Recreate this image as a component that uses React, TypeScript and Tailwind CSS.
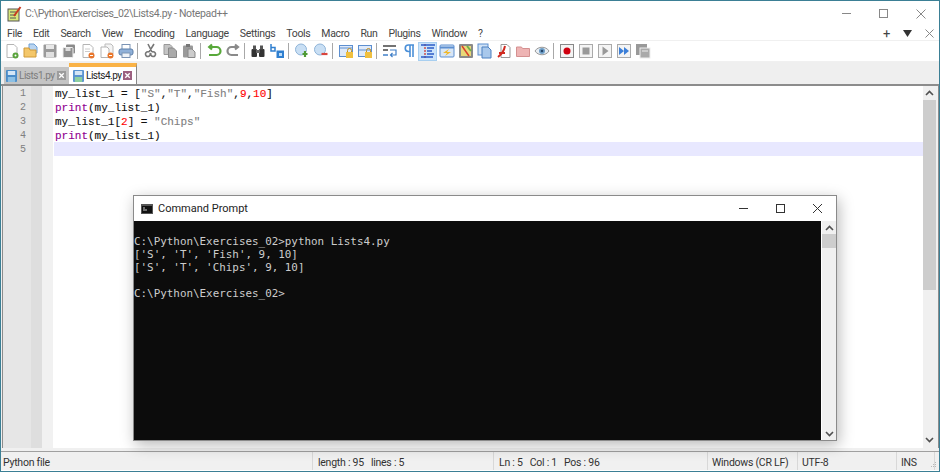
import type { ReactNode } from 'react';

const MENUS = ['File', 'Edit', 'Search', 'View', 'Encoding', 'Language', 'Settings', 'Tools', 'Macro', 'Run', 'Plugins', 'Window', '?'];

function Ico({ children }: { children: ReactNode }) {
  return (
    <svg width="16" height="16" viewBox="0 0 16 16" fill="none">
      {children}
    </svg>
  );
}

const Page = ({ fill = '#fff' }: { fill?: string }) => <path d="M3 1.5h7l3 3v10H3z" fill={fill} stroke="#b4b4b4" />;
const Floppy = ({ c = '#9a9a9a' }: { c?: string }) => (
  <>
    <rect x="1.5" y="1.5" width="13" height="13" rx="1" fill={c} />
    <rect x="4" y="2" width="8" height="4" fill="#e8e8e8" />
    <rect x="4" y="9" width="8" height="5" fill="#e0e0e0" />
  </>
);

// toolbar drawings, in the order they sit on the bar (null is a separator)
const TOOLS: (ReactNode | null)[] = [
  <><Page /><circle cx="11.5" cy="12.5" r="3" fill="#5aa33c" /><circle cx="11.5" cy="12.5" r="1" fill="#fff" /></>,
  <><path d="M6 1h5l3 3v6H6z" fill="#b9d4f0" stroke="#6f9fd4" /><path d="M1 5h5l1 2h6v7H1z" fill="#f4c76a" stroke="#d09a38" /></>,
  <Floppy />,
  <><rect x="5" y="1.5" width="9" height="9" rx="1" fill="#8a8a8a" /><rect x="2" y="4.5" width="10" height="10" rx="1" fill="#8f8f8f" stroke="#eee" /><rect x="4.5" y="5" width="5" height="3" fill="#ddd" /></>,
  <><Page /><path d="M5 6h5M5 8.5h5" stroke="#ccc" /><circle cx="11.5" cy="12.5" r="3" fill="#e8762c" /><path d="M10 12.5h3" stroke="#fff" /></>,
  <><path d="M6 1h6l2 2v8H6z" fill="#f4f4f4" stroke="#bbb" /><path d="M2 4h6l2 2v8.5H2z" fill="#fff" stroke="#b4b4b4" /><circle cx="11.5" cy="12.5" r="3" fill="#e8762c" /><path d="M10 12.5h3" stroke="#fff" /></>,
  <><rect x="4" y="1.5" width="8" height="5" fill="#fff" stroke="#7a93b4" /><rect x="1" y="6" width="14" height="6" rx="2" fill="#8fb0d8" stroke="#5d7ea8" /><rect x="4" y="10" width="8" height="4.5" fill="#eef2f7" stroke="#7a93b4" /></>,
  null,
  <path d="M5 1l4 8M11 1L6 9M6 9a2.4 2.4 0 1 0 1 1M9 9a2.4 2.4 0 1 1-1 1" stroke="#777" strokeWidth="1.6" />,
  <><path d="M2 1.5h6l2 2v8H2z" fill="#c4c4c4" stroke="#999" /><path d="M6.5 5h5l3 3v6.5h-8z" fill="#aaa" stroke="#888" /></>,
  <><rect x="2" y="2.5" width="10" height="12" rx="1" fill="#9a9a9a" /><rect x="5" y="1" width="4" height="3" fill="#777" /><path d="M7 6h4l3 3v5.5H7z" fill="#ccc" stroke="#888" /></>,
  null,
  <path d="M4 4h6.5a3.8 3.8 0 0 1 0 8H3M6 1.5L3.2 4 6 6.5" stroke="#58a83a" strokeWidth="2.2" />,
  <path d="M12 4H6.5a3.8 3.8 0 0 0 0 8H13M10 1.5L13 4 10 6.5" stroke="#8a8a8a" strokeWidth="2.2" />,
  null,
  <><rect x="1.5" y="6" width="5.5" height="8" rx="1" fill="#333" /><rect x="9" y="6" width="5.5" height="8" rx="1" fill="#333" /><rect x="3" y="2.5" width="3" height="4" fill="#555" /><rect x="10" y="2.5" width="3" height="4" fill="#555" /><rect x="6" y="7" width="4" height="3" fill="#666" /></>,
  <><path d="M2 1v7h4V4.5H2" stroke="#2f7fd0" strokeWidth="1.5" /><rect x="7.5" y="7.5" width="7.5" height="7.5" fill="#2f7fd0" /><path d="M10 10h3v3h-3z" fill="#bcdcf8" /></>,
  null,
  <><circle cx="7" cy="6.5" r="5.5" fill="#c9dff4" stroke="#8fb4d8" /><path d="M11 8v6M8.5 11h5" stroke="#4f9a35" strokeWidth="2.2" /></>,
  <><circle cx="7" cy="6.5" r="5.5" fill="#c9dff4" stroke="#8fb4d8" /><path d="M8.5 11h6" stroke="#d9443c" strokeWidth="2.2" /></>,
  null,
  <><rect x="1.5" y="2.5" width="13" height="11" fill="#dfeafa" stroke="#5d8fd0" /><path d="M1.5 5h13" stroke="#5d8fd0" /><rect x="8" y="9" width="7" height="6" fill="#f0c040" /><path d="M9.5 9V7.5a2 2 0 0 1 4 0V9" stroke="#c09020" /></>,
  <><rect x="1.5" y="2.5" width="13" height="11" fill="#dfeafa" stroke="#5d8fd0" /><path d="M1.5 7h13" stroke="#5d8fd0" /><rect x="8" y="9" width="7" height="6" fill="#f0c040" /><path d="M9.5 9V7.5a2 2 0 0 1 4 0V9" stroke="#c09020" /></>,
  null,
  <><path d="M1 3h13" stroke="#444" strokeWidth="1.5" /><path d="M1 7h5" stroke="#444" strokeWidth="1.5" /><path d="M8 7h6v5H9M10.5 10L8.5 12l2 2" stroke="#3f7fc8" strokeWidth="1.2" /><path d="M1 12h5" stroke="#3f7fc8" strokeWidth="1.5" /></>,
  <path d="M13 2H7.5a3.2 3.2 0 0 0 0 6.5H9V14M9 2v12M12 2v12" stroke="#4a8fd8" strokeWidth="1.6" />,
  'active',
  <><rect x="1" y="2" width="14" height="12" rx="1" fill="#d8e6f6" stroke="#5d8fd0" /><path d="M1 4.5h14" stroke="#5d8fd0" strokeWidth="2" /><path d="M10 6l-6 4h4l-2 3 6-4H8z" fill="#f0b828" /></>,
  <><rect x="1" y="1" width="14" height="14" rx="1" fill="#8a8a8a" /><rect x="3" y="3" width="10" height="10" fill="#e8d878" /><path d="M4 3l7 10" stroke="#d8402c" strokeWidth="1.5" /><path d="M9 3l4 5" stroke="#70b048" strokeWidth="2" /></>,
  <><rect x="1" y="1" width="10" height="11" fill="#d0e2f6" stroke="#5d8fd0" /><path d="M5 4h6l3 3v8H5z" fill="#a8c8ec" stroke="#4c80c0" /></>,
  <><path d="M5 1.5h6l3 3v10H5z" fill="#fff" stroke="#999" /><path d="M9 3C8 8 6 11 2 14M3 10h6" stroke="#d02a20" strokeWidth="2" /></>,
  <path d="M1.5 4h5l1 1.5h7v8h-13z" fill="#eeb4b4" stroke="#d49090" />,
  <><path d="M1 8c3-5 11-5 14 0-3 5-11 5-14 0z" fill="#e8eef4" stroke="#999" /><circle cx="8" cy="8" r="3" fill="#6f9fc8" /><circle cx="8" cy="8" r="1.3" fill="#26466a" /></>,
  null,
  <><rect x="1.5" y="1.5" width="13" height="13" fill="#f4f4f4" stroke="#888" /><circle cx="8" cy="8" r="3.5" fill="#d00010" /></>,
  <><rect x="1.5" y="1.5" width="13" height="13" fill="#f4f4f4" stroke="#aaa" /><rect x="4.5" y="4.5" width="7" height="7" fill="#999" /></>,
  <><rect x="1.5" y="1.5" width="13" height="13" fill="#f4f4f4" stroke="#aaa" /><path d="M5.5 3.5l6 4.5-6 4.5z" fill="#999" /></>,
  <><rect x="1.5" y="1.5" width="13" height="13" fill="#f4f4f4" stroke="#aaa" /><path d="M3 4l5 4-5 4zM8 4l5 4-5 4z" fill="#3c7fd8" /></>,
  <><rect x="1" y="1" width="11" height="11" fill="#999" /><rect x="5" y="5" width="10" height="10" fill="#aaa" stroke="#eee" /><path d="M7 8h6" stroke="#eee" /></>,
];

function IndentGuideIcon() {
  return (
    <Ico>
      <path d="M5 1v14" stroke="#d02a20" strokeWidth="1.2" strokeDasharray="2 1" />
      <path d="M1 2h14M7 5h7M7 8h5M7 11h7M1 14h12" stroke="#2c5cc8" strokeWidth="1.6" />
    </Ico>
  );
}

function Toolbar() {
  return (
    <div className="flex h-[22px] items-center border-y border-[#f0f0f0] bg-white pl-[1px]">
      {TOOLS.map((tool, i) =>
        tool === null ? (
          <div key={i} className="ml-[2px] mr-[3px] h-[16px] w-px bg-[#a8a8a8]" />
        ) : tool === 'active' ? (
          <div key={i} className="flex h-[19px] w-[19px] items-center justify-center border border-[#a8cff0] bg-[#cce4fa]">
            <IndentGuideIcon />
          </div>
        ) : (
          <div key={i} className="flex h-[19px] w-[19px] items-center justify-center">
            <Ico>{tool}</Ico>
          </div>
        ),
      )}
    </div>
  );
}

function TabIcon({ dim }: { dim?: boolean }) {
  return (
    <svg className="shrink-0" width="11" height="12" viewBox="0 0 12 12" preserveAspectRatio="none">
      <rect width="12" height="12" rx="1" fill={dim ? '#4a8cc8' : '#5a94d0'} />
      <rect x="2" y="1" width="8" height="4" fill="#d4e6f6" />
      <rect x="2" y="7" width="8" height="5" fill={dim ? '#8cc0e4' : '#8ed0a0'} />
    </svg>
  );
}

function TabClose({ color }: { color: string }) {
  return (
    <svg className="shrink-0" width="9" height="9" viewBox="0 0 10 10">
      <rect width="10" height="10" fill={color} />
      <path d="M2.5 2.5l5 5M7.5 2.5l-5 5" stroke="#fff" strokeWidth="1.5" />
    </svg>
  );
}

function Tabs() {
  return (
    <div className="flex h-[22px] items-end bg-[#efefef] pl-[3px] font-['Roboto',sans-serif] text-[10px]">
      <div className="flex h-[17px] w-[65px] items-center gap-[2px] bg-[#c4c4c4] pl-[2px] tracking-[-0.5px] text-[#7c7c7c]">
        <TabIcon dim />
        <span>Lists1.py</span>
        <span className="ml-auto mr-[3px] flex"><TabClose color="#9c9c9c" /></span>
      </div>
      <div className="flex h-[21px] w-[68px] items-center gap-[2px] border-t-[4px] border-r border-t-[#fab347] border-r-[#888] bg-white pl-[4px] tracking-[-0.5px] text-[#222]">
        <TabIcon />
        <span>Lists4.py</span>
        <span className="ml-auto mr-[4px] flex"><TabClose color="#9c6080" /></span>
      </div>
    </div>
  );
}

function Chevron({ up }: { up?: boolean }) {
  return (
    <svg width="9" height="6" viewBox="0 0 9 6" fill="none">
      <path d={up ? 'M1 5l3.5-3.5L8 5' : 'M1 1l3.5 3.5L8 1'} stroke="#505050" strokeWidth="1.6" />
    </svg>
  );
}

function CodeLine({ children, active }: { children?: ReactNode; active?: boolean }) {
  return <div className={`ml-[51px] h-[14px] whitespace-pre pl-[1px] leading-[16px] ${active ? 'bg-[#e8e8ff]' : ''}`}>{children}</div>;
}

const Str = ({ children }: { children: ReactNode }) => <span className="text-[#808080]">{children}</span>;
const Num = ({ children }: { children: ReactNode }) => <span className="text-[#ff0000]">{children}</span>;
const Fn = ({ children }: { children: ReactNode }) => <span className="text-[#900090]">{children}</span>;

function Editor() {
  return (
    <div className="flex h-[364px] border-t-[2px] border-[#8c8c8c] bg-[#f0f0f0] pl-[1px]">
      <div className="relative min-w-0 flex-1 border-l border-[#8c8c8c] bg-white">
        {/* margins */}
        <div className="absolute inset-y-0 left-0 flex">
          <div className="w-[28px] bg-[#e6e6e6]" />
          <div className="w-[11px] bg-[#dedede]" />
          <div className="w-[11px] bg-[#f1f1f1]" />
        </div>
        <div className="absolute left-0 top-0 w-[40px] pl-[17px] font-['Liberation_Mono',monospace] text-[10px] leading-[16px] text-[#808080]">
          {[1, 2, 3, 4, 5].map((n) => (
            <div key={n} className="h-[14px]">{n}</div>
          ))}
        </div>
        <div className="relative font-['Liberation_Mono',monospace] text-[11px] text-[#111] [-webkit-text-stroke:0.12px_currentColor]">
          <CodeLine>my_list_1 = [<Str>"S"</Str>,<Str>"T"</Str>,<Str>"Fish"</Str>,<Num>9</Num>,<Num>10</Num>]</CodeLine>
          <CodeLine><Fn>print</Fn>(my_list_1)</CodeLine>
          <CodeLine>my_list_1[<Num>2</Num>] = <Str>"Chips"</Str></CodeLine>
          <CodeLine><Fn>print</Fn>(my_list_1)</CodeLine>
          <CodeLine active />
        </div>
      </div>
      <div className="flex w-[13px] flex-col bg-[#f0f0f0]">
        <div className="flex h-[14px] items-center justify-center"><Chevron up /></div>
        <div className="h-[190px] bg-[#cdcdcd]" />
        <div className="mt-auto flex h-[14px] items-center justify-center pb-[2px]"><Chevron /></div>
      </div>
      <div className="w-[3px] border-r border-[#8c8c8c] bg-[#f0f0f0]" />
    </div>
  );
}

function StatusCell({ w, children }: { w: string; children?: ReactNode }) {
  return <div className={`flex h-full items-center whitespace-pre border-r border-[#d8d8d8] pt-[4px] ${w}`}>{children}</div>;
}

function StatusBar() {
  return (
    <div className="relative flex h-[19px] border-t border-[#a0a0a0] bg-[#f0f0f0] font-['Roboto',sans-serif] text-[10.5px] tracking-[-0.25px] text-[#333]">
      <StatusCell w="w-[312px] pl-[2px]">Python file</StatusCell>
      <StatusCell w="w-[181px] pl-[5px]">length : 95   lines : 5</StatusCell>
      <StatusCell w="w-[214px] pl-[5px]">Ln : 5   Col : 1   Pos : 96</StatusCell>
      <StatusCell w="w-[90px] pl-[4px]">Windows (CR LF)</StatusCell>
      <StatusCell w="w-[99px] pl-[4px]">UTF-8</StatusCell>
      <StatusCell w="w-[38px] pl-[4px]">INS</StatusCell>
      {/* resize grip */}
      <svg className="absolute bottom-[1px] right-[1px]" width="8" height="8" viewBox="0 0 8 8" fill="#b8b8b8">
        <rect x="5" y="1" width="1" height="1" />
        <rect x="3" y="3" width="1" height="1" />
        <rect x="5" y="3" width="1" height="1" />
        <rect x="1" y="5" width="1" height="1" />
        <rect x="3" y="5" width="1" height="1" />
        <rect x="5" y="5" width="1" height="1" />
      </svg>
    </div>
  );
}

function CommandPrompt() {
  return (
    <div className="absolute left-[133px] top-[195px] flex h-[246px] w-[704px] flex-col border border-[#8a8a8a] bg-white shadow-[2px_4px_14px_rgba(0,0,0,0.28)]">
      <div className="flex h-[25px] items-center pl-[7px]">
        <svg width="12" height="10" viewBox="0 0 12 10">
          <rect width="12" height="10" fill="#555" />
          <rect x="1" y="2" width="10" height="7" fill="#111" />
          <path d="M2 4h2M2 6h4" stroke="#ccc" />
        </svg>
        <span className="ml-[5px] pt-[1px] font-['Roboto',sans-serif] text-[11px] text-[#222]">Command Prompt</span>
        <div className="ml-auto flex items-center">
          <div className="flex w-[37px] justify-center"><div className="h-px w-[9px] bg-[#333]" /></div>
          <div className="flex w-[37px] justify-center"><div className="h-[9px] w-[9px] border border-[#333]" /></div>
          <div className="flex w-[37px] justify-center">
            <svg width="11" height="11" viewBox="0 0 11 11" fill="none"><path d="M1 1l9 9M10 1l-9 9" stroke="#333" /></svg>
          </div>
        </div>
      </div>
      <div className="flex min-h-0 flex-1">
        <div className="flex-1 whitespace-pre bg-[#0c0c0c] pt-[14px] font-['DejaVu_Sans_Mono',monospace] text-[10.9px] leading-[13px] text-[#cccccc]">
          {"C:\\Python\\Exercises_02>python Lists4.py\n['S', 'T', 'Fish', 9, 10]\n['S', 'T', 'Chips', 9, 10]\n\nC:\\Python\\Exercises_02>"}
        </div>
        <div className="ml-px flex w-[14px] flex-col bg-[#f0f0f0]">
          <div className="flex h-[13px] items-center justify-center"><Chevron up /></div>
          <div className="h-[14px] bg-[#cdcdcd]" />
          <div className="mt-auto flex h-[13px] items-center justify-center"><Chevron /></div>
        </div>
      </div>
    </div>
  );
}

export default function App() {
  return (
    <div className="relative h-[472px] w-[940px] overflow-hidden bg-[#3b7f95] p-[1px]">
      <div className="flex h-[470px] flex-col bg-white">
        {/* Title bar */}
        <div className="flex h-[25px] items-center pl-[6px] font-['Roboto',sans-serif] text-[10.5px] tracking-[-0.35px] text-[#777]">
          <svg className="shrink-0" width="15" height="16" viewBox="0 0 15 16">
            <rect x="1" y="3" width="11" height="12" fill="#d8e87c" stroke="#555" />
            <path d="M3 6h6M3 9h6M3 12h6" stroke="#555" />
            <path d="M13.5 1L7 10" stroke="#c83a20" strokeWidth="2" />
          </svg>
          <span className="ml-[3px]">C:\Python\Exercises_02\Lists4.py - Notepad++</span>
          <div className="ml-auto flex items-center">
            <div className="flex w-[37px] justify-center"><div className="h-px w-[9px] bg-[#888]" /></div>
            <div className="flex w-[37px] justify-center"><div className="h-[9px] w-[9px] border border-[#888]" /></div>
            <div className="flex w-[37px] justify-center">
              <svg width="10" height="10" viewBox="0 0 10 10" fill="none"><path d="M.5.5l9 9M9.5.5l-9 9" stroke="#888" /></svg>
            </div>
          </div>
        </div>
        {/* Menu bar */}
        <div className="flex h-[14px] items-center gap-[11px] pl-[6px] pt-[1px] font-['Roboto',sans-serif] text-[10.5px] tracking-[-0.35px] text-[#444]">
          {MENUS.map((m) => (
            <span key={m}>{m}</span>
          ))}
          <div className="ml-auto flex items-center gap-[13px] pr-[5px]">
            <span className="text-[13px] leading-none">+</span>
            <svg width="9" height="7" viewBox="0 0 9 7"><path d="M0 0h9L4.5 7z" fill="#333" /></svg>
            <svg width="9" height="9" viewBox="0 0 9 9" fill="none"><path d="M.5.5l8 8M8.5.5l-8 8" stroke="#888" /></svg>
          </div>
        </div>
        <Toolbar />
        <Tabs />
        <Editor />
        <div className="h-[3px] bg-[#f0f0f0]" />
        <StatusBar />
      </div>
      <CommandPrompt />
    </div>
  );
}
